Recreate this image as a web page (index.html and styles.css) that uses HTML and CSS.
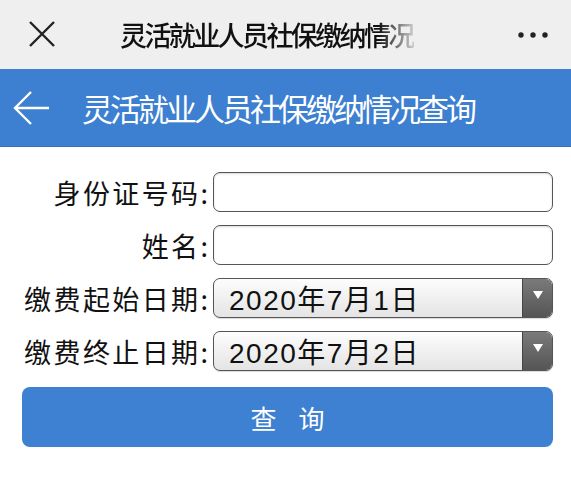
FILE: index.html
```html
<!DOCTYPE html>
<html lang="zh">
<head>
<meta charset="utf-8">
<link rel="stylesheet" href="styles.css">
</head>
<body>
<div class="topbar">
  <svg class="close" width="30" height="30" viewBox="0 0 30 30"><path d="M3 3 L27 27 M27 3 L3 27" stroke="#222" stroke-width="2.4" fill="none"/></svg>
  <div class="toptitle">灵活就业人员社保缴纳情况</div>
  <svg class="more" width="32" height="8" viewBox="0 0 32 8"><circle cx="4" cy="4" r="2.7" fill="#222"/><circle cx="16" cy="4" r="2.7" fill="#222"/><circle cx="28" cy="4" r="2.7" fill="#222"/></svg>
</div>
<div class="header">
  <svg class="back" width="38" height="36" viewBox="0 0 38 36"><path d="M36 18 H3 M18 2 L2 18 L18 34" stroke="#fff" stroke-width="2.4" fill="none" stroke-linejoin="miter"/></svg>
  <div class="htitle">灵活就业人员社保缴纳情况查询</div>
</div>
<div class="form">
  <label class="lbl">身份证号码:</label>
  <div class="input"></div>
  <label class="lbl">姓名:</label>
  <div class="input"></div>
  <label class="lbl">缴费起始日期:</label>
  <div class="select"><span class="val">2020年7月1日</span><span class="arrow"><svg width="12" height="10" viewBox="0 0 12 10"><path d="M1 1 H11 L6 9 Z" fill="#fff"/></svg></span></div>
  <label class="lbl">缴费终止日期:</label>
  <div class="select"><span class="val">2020年7月2日</span><span class="arrow"><svg width="12" height="10" viewBox="0 0 12 10"><path d="M1 1 H11 L6 9 Z" fill="#fff"/></svg></span></div>
</div>
<div class="btnwrap"><div class="btn">查 询</div></div>
</body>
</html>
```
FILE: styles.css
```css
html, body { margin: 0; padding: 0; background: #fff; }
body { font-family: "Liberation Sans", "Noto Sans CJK SC", sans-serif; color: #111; width: 571px; }
.topbar { height: 69px; background: #efefef; display: flex; align-items: center; position: relative; }
.close { margin-left: 27px; margin-top: -1px; }
.toptitle { margin-left: 63px; width: 294px; font-size: 27px; font-weight: 500; color: #111; white-space: nowrap; overflow: hidden;
  font-family: "Noto Sans CJK SC", sans-serif; letter-spacing: -2.6px;
  -webkit-mask-image: linear-gradient(to right, #000 88%, rgba(0,0,0,0.15) 100%); mask-image: linear-gradient(to right, #000 88%, rgba(0,0,0,0.15) 100%); }
.more { margin-left: auto; margin-right: 22px; }
.header { height: 78px; background: #3d7fd0; display: flex; align-items: center; border-bottom: 1px solid #3872bc; box-sizing: border-box; }
.back { margin-left: 13px; }
.htitle { margin-left: 31px; color: #fff; font-size: 31px; font-family: "Noto Sans CJK SC", sans-serif; font-weight: 400; letter-spacing: -3px; }
.form { display: grid; grid-template-columns: 208px 1fr; column-gap: 5px; row-gap: 13px; grid-auto-rows: 40px; padding: 25px 18px 0 0; }
.lbl { display: flex; align-items: center; justify-content: flex-end; font-size: 27px; letter-spacing: 2.4px; font-family: "Noto Sans CJK SC", sans-serif; color: #111; white-space: nowrap; margin-right: -2.4px; }
.input { border: 1.5px solid #555; border-radius: 7px; background: #fff; box-shadow: inset 0 1px 2px rgba(0,0,0,0.15); }
.select { border: 1.5px solid #555; border-radius: 7px; display: flex; overflow: hidden; background: linear-gradient(#fdfdfd, #e4e4e4); box-shadow: 0 1px 1px rgba(0,0,0,0.15); }
.val { flex: 1; display: flex; align-items: center; padding-left: 15px; font-size: 28px; letter-spacing: 1.5px; color: #111; white-space: nowrap; }
.arrow { width: 30px; display: flex; align-items: center; justify-content: center; background: linear-gradient(#7a7a7a, #555); border-left: 1px solid #444; padding-bottom: 6px; box-sizing: border-box; }
.btnwrap { padding: 16px 18px 0 22px; }
.btn { height: 60px; background: #3e80d1; border-radius: 8px; color: #fff; font-size: 26px; display: flex; align-items: center; justify-content: center; font-family: "Noto Sans CJK SC", sans-serif; letter-spacing: 8px; padding-left: 8px; box-sizing: border-box; }
```
